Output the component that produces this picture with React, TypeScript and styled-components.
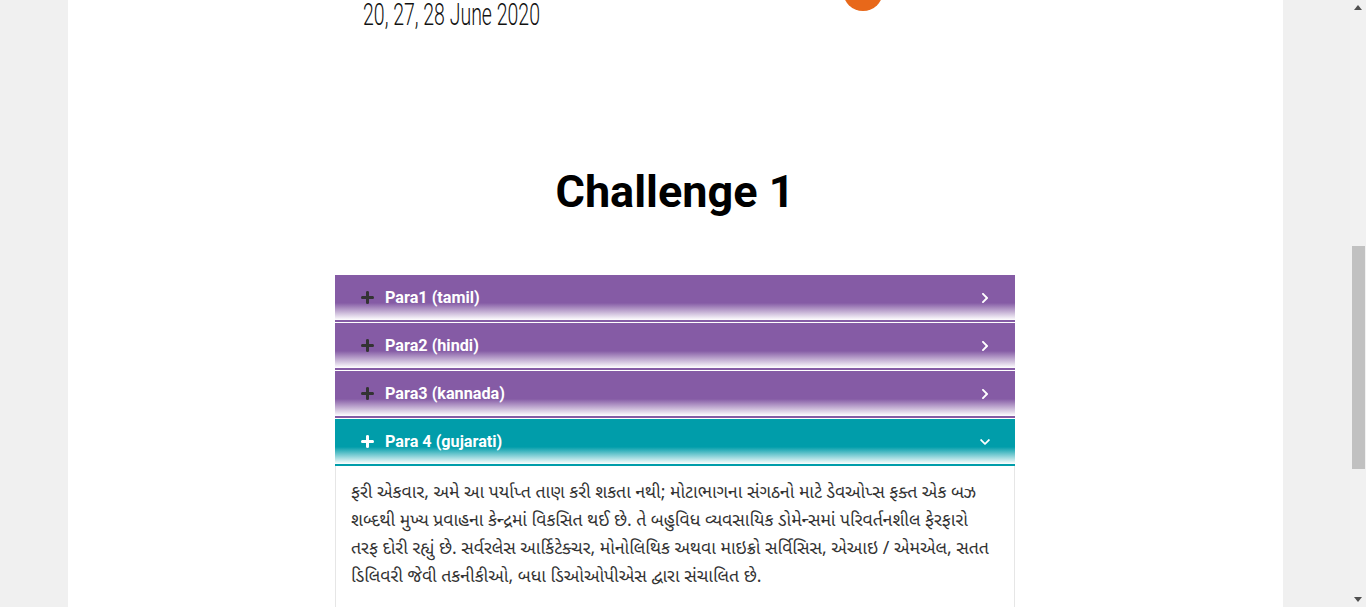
import React from "react";
import styled, { createGlobalStyle } from "styled-components";
import { FaChevronRight, FaChevronDown } from "react-icons/fa";

const Global = createGlobalStyle`
  html, body { margin: 0; padding: 0; height: 100%; overflow: hidden; }
  body { font-family: Roboto, "Liberation Sans", sans-serif; background: #f0f0f0; }
`;

const Viewport = styled.div`
  display: flex;
  height: 607px;
  overflow: hidden;
`;

const Page = styled.div`
  flex: 1;
  background: #f0f0f0;
  display: flex;
  justify-content: center;
`;

const Column = styled.main`
  width: 1215px;
  background: #ffffff;
  display: flex;
  flex-direction: column;
  align-items: center;
`;

const Banner = styled.svg`
  display: block;
  width: 680px;
  height: 40px;
  flex: none;
`;

const Heading = styled.h1`
  margin: 129px 0 0;
  font-family: Roboto, "Liberation Sans", sans-serif;
  font-weight: 700;
  font-size: 45px;
  line-height: 46px;
  color: #000;
  text-align: center;
`;

const Accordion = styled.section`
  width: 680px;
  margin-top: 60px;
  display: flex;
  flex-direction: column;
`;

const Header = styled.div<{ $color: string; $active?: boolean }>`
  height: 45px;
  display: flex;
  align-items: center;
  padding: 0 26px;
  background: linear-gradient(
    to bottom,
    ${(p) => p.$color} 0%,
    ${(p) => p.$color} 62%,
    #ffffff 100%
  );
  border-bottom: 2px solid ${(p) => p.$color};
  margin-bottom: ${(p) => (p.$active ? 0 : 1)}px;
  color: #fff;
  cursor: pointer;
`;

const PlusIcon = styled.svg<{ $active?: boolean }>`
  display: block;
  width: 13px;
  height: 13px;
  flex: none;
  margin-right: 11px;
  fill: ${(p) => (p.$active ? "#ffffff" : "#333333")};
`;

const Title = styled.span`
  flex: 1;
  font-family: Roboto, "Liberation Sans", sans-serif;
  font-weight: 700;
  font-size: 16.2px;
`;

const Chevron = styled.span`
  display: flex;
  color: #fff;
  margin-right: -1px;
  svg { width: 10px; height: 12px; }
`;

const Panel = styled.div`
  border: 1px solid #e6e6e6;
  border-top: none;
  padding: 14px 15px 16px;
  font-family: "Lohit Gujarati", "Noto Sans Gujarati", "Shruti", "Noto Sans", sans-serif;
  font-size: 17.6px;
  line-height: 28px;
  color: #333;
  white-space: nowrap;
`;

const Scrollbar = styled.div`
  width: 16px;
  flex: none;
  background: #f1f1f1;
  display: flex;
  flex-direction: column;
  align-items: center;
  justify-content: space-between;
  padding: 5px 0;
  box-sizing: border-box;
`;

const Track = styled.div`
  flex: 1;
  width: 100%;
  display: flex;
  flex-direction: column;
  align-items: center;
`;

const Thumb = styled.div`
  margin-top: 236px;
  width: 13px;
  margin-left: 1px;
  height: 223px;
  background: #c1c1c1;
`;

const Arrow = styled.svg`
  width: 8px;
  height: 5px;
  display: block;
`;

const items = [
  { title: "Para1 (tamil)", active: false },
  { title: "Para2 (hindi)", active: false },
  { title: "Para3 (kannada)", active: false },
  { title: "Para 4 (gujarati)", active: true },
];

const lines = [
  "ફરી એકવાર, અમે આ પર્યાપ્ત તાણ કરી શકતા નથી; મોટાભાગના સંગઠનો માટે ડેવઓપ્સ ફક્ત એક બઝ",
  "શબ્દથી મુખ્ય પ્રવાહના કેન્દ્રમાં વિકસિત થઈ છે. તે બહુવિધ વ્યવસાયિક ડોમેન્સમાં પરિવર્તનશીલ ફેરફારો",
  "તરફ દોરી રહ્યું છે. સર્વરલેસ આર્કિટેક્ચર, મોનોલિથિક અથવા માઇક્રો સર્વિસિસ, એઆઇ / એમએલ, સતત",
  "ડિલિવરી જેવી તકનીકીઓ, બધા ડિઓઓપીએસ દ્વારા સંચાલિત છે.",
];

export default function App() {
  return (
    <>
      <Global />
      <Viewport>
        <Page>
          <Column>
            <Banner viewBox="0 0 680 40">
              <text
                x="28"
                y="25"
                fontFamily="Roboto, 'DejaVu Sans', sans-serif"
                fontWeight={300}
                fontSize="31"
                fill="#111"
                textLength="177"
                lengthAdjust="spacingAndGlyphs"
              >
                20, 27, 28 June 2020
              </text>
              <circle cx="528" cy="-9" r="20" fill="#e8681a" />
            </Banner>
            <Heading>Challenge 1</Heading>
            <Accordion>
              {items.map((it) => (
                <Header
                  key={it.title}
                  $color={it.active ? "#009daa" : "#855ba5"}
                  $active={it.active}
                >
                  <PlusIcon $active={it.active} viewBox="0 0 13 13">
                    <path d="M5 1.2 Q5 0 6.5 0 Q8 0 8 1.2 V5 H11.8 Q13 5 13 6.5 Q13 8 11.8 8 H8 V11.8 Q8 13 6.5 13 Q5 13 5 11.8 V8 H1.2 Q0 8 0 6.5 Q0 5 1.2 5 H5 Z" />
                  </PlusIcon>
                  <Title>{it.title}</Title>
                  <Chevron>{it.active ? <FaChevronDown /> : <FaChevronRight />}</Chevron>
                </Header>
              ))}
              <Panel>
                {lines.map((l, i) => (
                  <React.Fragment key={i}>
                    {l}
                    {i < lines.length - 1 && <br />}
                  </React.Fragment>
                ))}
              </Panel>
            </Accordion>
          </Column>
        </Page>
        <Scrollbar>
          <Arrow viewBox="0 0 8 5">
            <polygon points="4,0 8,5 0,5" fill="#505050" />
          </Arrow>
          <Track>
            <Thumb />
          </Track>
          <Arrow viewBox="0 0 8 5">
            <polygon points="0,0 8,0 4,5" fill="#505050" />
          </Arrow>
        </Scrollbar>
      </Viewport>
    </>
  );
}
